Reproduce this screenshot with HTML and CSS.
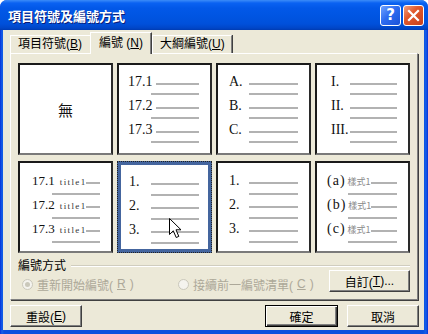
FILE: index.html
```html
<!DOCTYPE html>
<html lang="zh-Hant">
<head>
<meta charset="utf-8">
<title>項目符號及編號方式</title>
<link rel="stylesheet" href="styles.css">
</head>
<body>
<div class="win">
  <div class="titlebar">
    <span class="title">項目符號及編號方式</span>
    <div class="tbtns">
      <span class="tbtn help">?</span>
      <span class="tbtn close"><svg width="13" height="13" viewBox="0 0 13 13"><path d="M2 2 L11 11 M11 2 L2 11" stroke="#fff" stroke-width="2.2" stroke-linecap="square"/></svg></span>
    </div>
  </div>
  <div class="client">
    <div class="tabs">
      <div class="tab t1">項目符號(<u>B</u>)</div>
      <div class="tab active">編號 (<u>N</u>)</div>
      <div class="tab t3">大綱編號(<u>U</u>)</div>
    </div>
    <div class="panel">
      <div class="grid">
        <div class="box b-none">無</div>
        <div class="box b-171">
          <div class="item"><div class="r1"><span class="lb">17.1</span><i class="ln"></i></div><i class="ln l2"></i></div>
          <div class="item"><div class="r1"><span class="lb">17.2</span><i class="ln"></i></div><i class="ln l2"></i></div>
          <div class="item"><div class="r1"><span class="lb">17.3</span><i class="ln"></i></div><i class="ln l2"></i></div>
        </div>
        <div class="box b-abc">
          <div class="item"><div class="r1"><span class="lb">A.</span><i class="ln"></i></div><i class="ln l2"></i></div>
          <div class="item"><div class="r1"><span class="lb">B.</span><i class="ln"></i></div><i class="ln l2"></i></div>
          <div class="item"><div class="r1"><span class="lb">C.</span><i class="ln"></i></div><i class="ln l2"></i></div>
        </div>
        <div class="box b-rom">
          <div class="item"><div class="r1"><span class="lb">I.</span><i class="ln"></i></div><i class="ln l2"></i></div>
          <div class="item"><div class="r1"><span class="lb">II.</span><i class="ln"></i></div><i class="ln l2"></i></div>
          <div class="item"><div class="r1"><span class="lb">III.</span><i class="ln"></i></div><i class="ln l2"></i></div>
        </div>
        <div class="box b-title">
          <div class="item"><div class="r1"><span class="lb">17.1<small class="tt">title1</small></span><i class="ln"></i></div><i class="ln l2"></i></div>
          <div class="item"><div class="r1"><span class="lb">17.2<small class="tt">title1</small></span><i class="ln"></i></div><i class="ln l2"></i></div>
          <div class="item"><div class="r1"><span class="lb">17.3<small class="tt">title1</small></span><i class="ln"></i></div><i class="ln l2"></i></div>
        </div>
        <div class="box b-sel">
          <div class="item"><div class="r1"><span class="lb">1.</span><i class="ln"></i></div><i class="ln l2"></i></div>
          <div class="item"><div class="r1"><span class="lb">2.</span><i class="ln"></i></div><i class="ln l2"></i></div>
          <div class="item"><div class="r1"><span class="lb">3.</span><i class="ln"></i></div><i class="ln l2"></i></div>
          <svg class="cursor" width="14" height="21" viewBox="0 0 14 21"><path d="M0.5 0.5 L0.5 16.5 L4.3 12.8 L7.2 19.5 L9.8 18.4 L7 11.8 L12 11.8 Z" fill="#fff" stroke="#000" stroke-width="1" stroke-linejoin="miter"/></svg>
        </div>
        <div class="box b-num">
          <div class="item"><div class="r1"><span class="lb">1.</span><i class="ln"></i></div><i class="ln l2"></i></div>
          <div class="item"><div class="r1"><span class="lb">2.</span><i class="ln"></i></div><i class="ln l2"></i></div>
          <div class="item"><div class="r1"><span class="lb">3.</span><i class="ln"></i></div><i class="ln l2"></i></div>
        </div>
        <div class="box b-par">
          <div class="item"><div class="r1"><span class="lb">(a)<small class="st">樣式1</small></span><i class="ln"></i></div><i class="ln l2"></i></div>
          <div class="item"><div class="r1"><span class="lb">(b)<small class="st">樣式1</small></span><i class="ln"></i></div><i class="ln l2"></i></div>
          <div class="item"><div class="r1"><span class="lb">(c)<small class="st">樣式1</small></span><i class="ln"></i></div><i class="ln l2"></i></div>
        </div>
      </div>
      <div class="group">
        <div class="legend"><span>編號方式</span><i class="etch"></i></div>
        <div class="grow">
          <label class="radio r-first"><span class="dot on"></span>重新開始編號(<u>R</u>)</label>
          <label class="radio"><span class="dot"></span>接續前一編號清單(<u>C</u>)</label>
          <span class="btn b-custom">自訂(<u>T</u>)...</span>
        </div>
      </div>
    </div>
    <div class="footer">
      <span class="btn b-reset">重設(<u>E</u>)</span>
      <span class="btn b-ok">確定</span>
      <span class="btn b-cancel">取消</span>
    </div>
  </div>
</div>
</body>
</html>
```

FILE: styles.css
```css
* { box-sizing: border-box; }
html, body { margin: 0; padding: 0; }
body {
  width: 428px;
  height: 334px;
  overflow: hidden;
  background: #fff;
  font-family: "Liberation Sans", "Noto Sans CJK TC", sans-serif;
  font-size: 12px;
  color: #000;
}
u { text-decoration: underline; text-underline-offset: 1px; }
i { font-style: normal; }

.win {
  width: 428px;
  height: 334px;
  display: flex;
  flex-direction: column;
  background: linear-gradient(to right, #0831D9 0, #1660E8 2px, #0A4FDE 4px, #0A4FDE 423px, #1660E8 426px, #0831D9 428px);
  border-radius: 7px 7px 0 0;
}

.titlebar {
  height: 30px;
  flex: none;
  display: flex;
  align-items: center;
  padding: 0 4px 0 8px;
  border-radius: 7px 7px 0 0;
  background: linear-gradient(to bottom, #3C8CF8 0, #0A62F2 3px, #0258E8 8px, #0055E2 16px, #0050DA 24px, #0046C8 28px, #003BB2 30px);
}
.title {
  flex: 1;
  color: #fff;
  font-family: "Noto Sans CJK TC", sans-serif;
  font-weight: bold;
  font-size: 13px;
  text-shadow: 1px 1px 0 #0A1E78;
}
.tbtns { display: flex; gap: 2px; }
.tbtn {
  width: 21px;
  height: 21px;
  border: 1px solid #fff;
  border-radius: 3px;
  display: flex;
  align-items: center;
  justify-content: center;
  color: #fff;
}
.help {
  background: linear-gradient(135deg, #6FA3FF 0, #2E6CF0 45%, #1A52D8 100%);
  font: bold 15px "DejaVu Sans", sans-serif;
}
.close {
  background: linear-gradient(135deg, #F0A080 0, #E2592C 40%, #C8401C 100%);
}

.client {
  flex: 1;
  margin: 0 4px 4px 3px;
  background: #ECE9D8;
  padding: 2px 6px 0 7px;
  display: flex;
  flex-direction: column;
}

.tabs {
  height: 21px;
  display: flex;
  align-items: flex-end;
  position: relative;
  z-index: 1;
}
.tab {
  height: 18px;
  line-height: 17px;
  background: #ECE9D8;
  border-top: 1px solid #fff;
  border-left: 1px solid #fff;
  border-right: 1px solid #808080;
  padding: 0 0 0 7px;
  white-space: nowrap;
}
.t1 { width: 80px; border-right: none; }
.t3 { width: 80px; padding-left: 7px; box-shadow: 1px 0 0 #404040; }
.tab.active {
  width: 62px;
  height: 22px;
  line-height: 20px;
  margin-bottom: -1px;
  padding-left: 8px;
  border-right: 1px solid #404040;
  box-shadow: inset -1px 0 0 #808080;
}

.panel {
  width: 408px;
  height: 247px;
  border: 1px solid;
  border-color: #fff #808080 #808080 #fff;
  box-shadow: 1px 1px 0 #404040;
  padding: 9px 7px 0 7px;
  display: flex;
  flex-direction: column;
}

.grid {
  display: grid;
  grid-template-columns: repeat(4, 95px);
  grid-template-rows: 92px 92px;
  column-gap: 4px;
  row-gap: 6px;
}

.box {
  position: relative;
  background: #fff;
  border: 2px solid;
  border-color: #1A1A1A #2A2A2A #7A7A7A #1A1A1A;
  font-family: "Liberation Serif", "Noto Sans CJK TC", serif;
  font-size: 14px;
  color: #111;
  padding: 10px 11px 0 11px;
  --lw: 20px;
  --l2: 20px;
}
.b-none {
  display: flex;
  align-items: center;
  justify-content: center;
  font-family: "Noto Sans CJK TC", sans-serif;
  font-size: 15px;
  padding: 0;
}
.b-171 { padding: 10px 11px 0 9px; --lw: 28px; --l2: 23px; }
.b-abc { padding: 10px 11px 0 11px; --lw: 20px; --l2: 20px; }
.b-rom { padding: 10px 11px 0 14px; --lw: 19px; --l2: 19px; }
.b-title { padding: 11px 11px 0 12px; --lw: 54px; --l2: 20px; font-size: 13px; }
.b-sel {
  border: 4px solid #44659E;
  outline: 1px dotted #222;
  outline-offset: -1px;
  padding: 10px 9px 0 8px;
  --lw: 22px;
  --l2: 22px;
}
.b-num { padding: 11px 11px 0 11px; --lw: 20px; --l2: 20px; }
.b-par { padding: 11px 11px 0 10px; --lw: 44px; --l2: 21px; }

.item { height: 24px; }
.r1 {
  display: flex;
  align-items: flex-start;
  height: 14px;
  line-height: 14px;
}
.lb { width: var(--lw); flex: none; white-space: nowrap; }
.ln {
  display: block;
  flex: 1;
  height: 2px;
  margin-top: 8px;
  background: #B2B2B2;
}
.ln.l2 { margin-left: var(--l2); margin-top: 4px; }
.b-title .l2, .b-par .l2, .b-num .l2, .b-sel .l2 { margin-top: 5px; }

.tt {
  font-family: "Liberation Serif", serif;
  font-size: 9px;
  letter-spacing: 1.4px;
  margin-left: 5px;
  color: #333;
}
.b-par .lb { letter-spacing: 1px; }
.st {
  font-family: "Noto Sans CJK TC", sans-serif;
  font-size: 9px;
  letter-spacing: 0;
  margin-left: 2px;
  color: #8A8A8A;
}

.cursor {
  position: absolute;
  left: 48px;
  top: 53px;
}

.group {
  margin-top: 6px;
  display: flex;
  flex-direction: column;
}
.legend {
  height: 14px;
  line-height: 14px;
  display: flex;
  align-items: center;
  gap: 5px;
}
.etch {
  display: block;
  flex: 1;
  height: 2px;
  border-top: 1px solid #D0CDBF;
  border-bottom: 1px solid #fff;
}
.grow {
  display: flex;
  align-items: flex-start;
  margin-top: -3px;
  padding-left: 4px;
}
.radio {
  display: flex;
  align-items: center;
  gap: 4px;
  height: 14px;
  margin-top: 7px;
  color: #ACA899;
  white-space: nowrap;
}
.r-first { width: 156px; }
.dot {
  width: 11px;
  height: 11px;
  border-radius: 50%;
  border: 1px solid #CAC8BB;
  background: #F4F3EE;
  display: flex;
  align-items: center;
  justify-content: center;
}
.dot.on::after {
  content: "";
  width: 5px;
  height: 5px;
  border-radius: 50%;
  background: #CAC8BB;
}

.btn {
  display: flex;
  align-items: center;
  justify-content: center;
  height: 22px;
  background: #ECE9D8;
  border: 1px solid;
  border-color: #fff #404040 #404040 #fff;
  box-shadow: inset -1px -1px 0 #808080;
  white-space: nowrap;
  color: #000;
}
.b-custom { margin-left: auto; width: 81px; }

.footer {
  display: flex;
  margin-top: 5px;
  margin-right: -1px;
}
.b-reset { width: 72px; }
.b-ok {
  width: 73px;
  margin-left: auto;
  border: 1px solid #000;
  box-shadow: inset 1px 1px 0 #fff, inset -1px -1px 0 #404040, inset -2px -2px 0 #808080;
}
.b-cancel { width: 72px; margin-left: 9px; }
```
